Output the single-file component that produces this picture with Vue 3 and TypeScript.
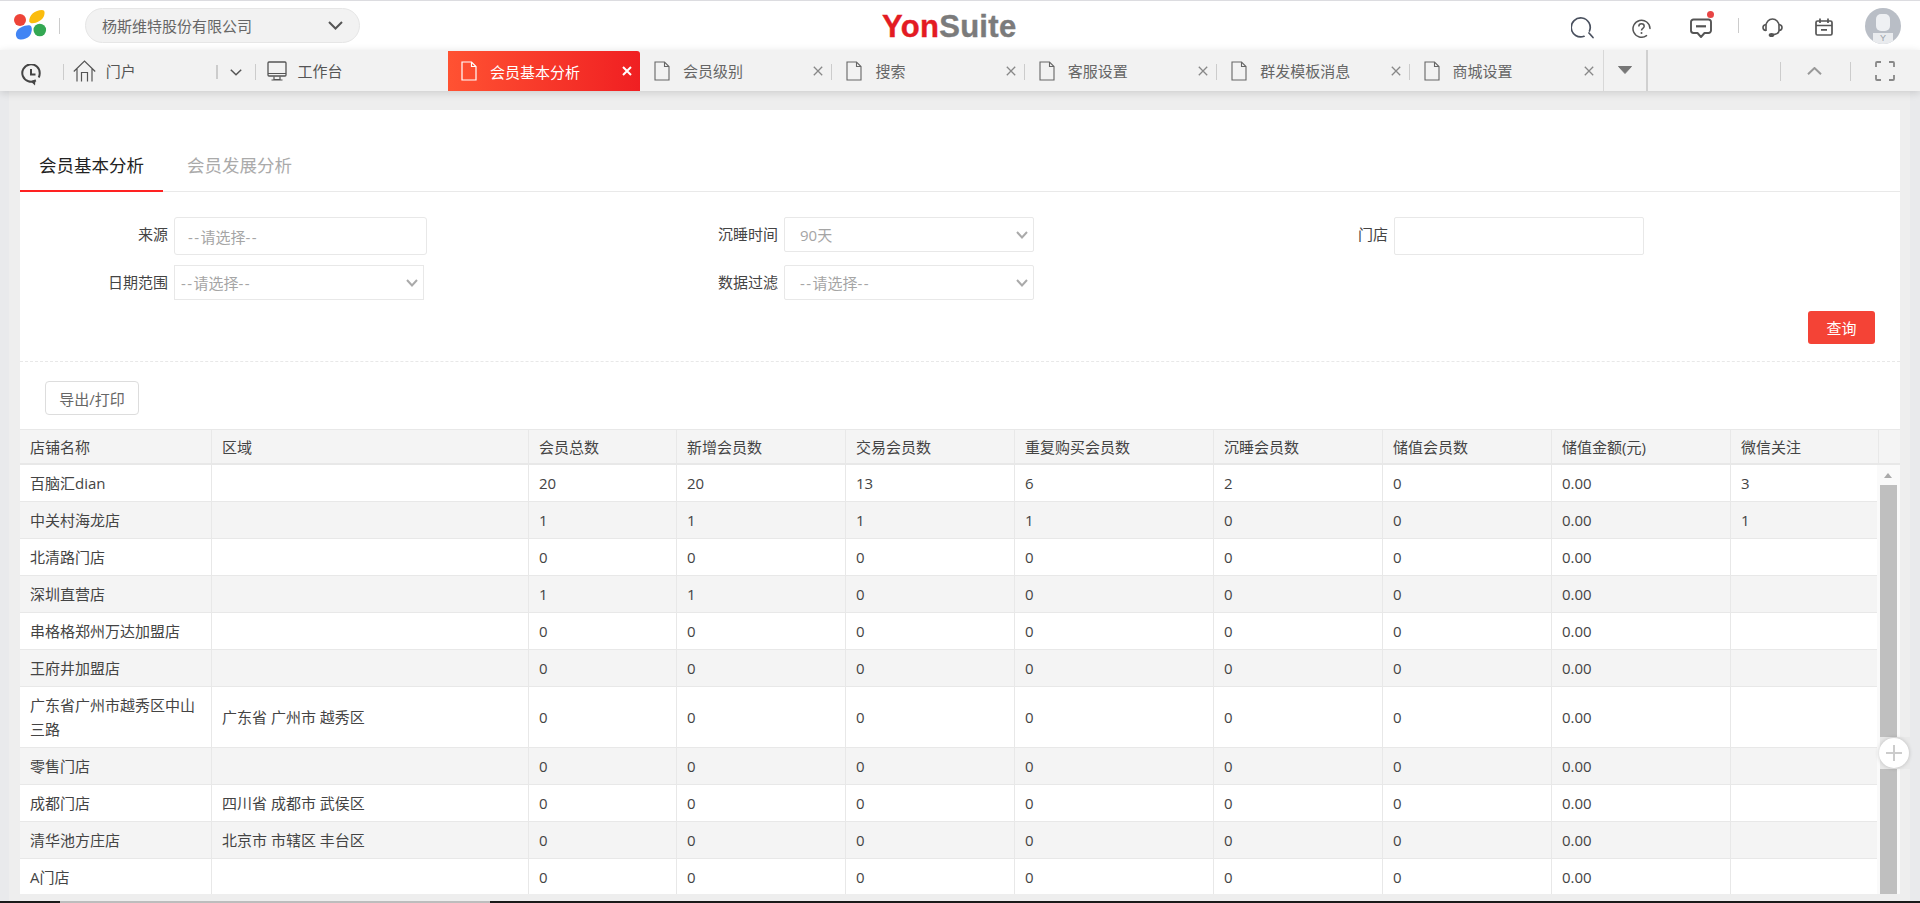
<script setup lang="ts">
interface Row { name: string; area: string; v: string[] }
const z = ['0', '0', '0', '0', '0', '0', '0.00', '']
const tabs: string[] = ['会员级别', '搜索', '客服设置', '群发模板消息', '商城设置']
const heads: string[] = ['店铺名称', '区域', '会员总数', '新增会员数', '交易会员数', '重复购买会员数', '沉睡会员数', '储值会员数', '储值金额(元)', '微信关注']
const rows: Row[] = [
  { name: '百脑汇dian', area: '', v: ['20', '20', '13', '6', '2', '0', '0.00', '3'] },
  { name: '中关村海龙店', area: '', v: ['1', '1', '1', '1', '0', '0', '0.00', '1'] },
  { name: '北清路门店', area: '', v: z },
  { name: '深圳直营店', area: '', v: ['1', '1', '0', '0', '0', '0', '0.00', ''] },
  { name: '串格格郑州万达加盟店', area: '', v: z },
  { name: '王府井加盟店', area: '', v: z },
  { name: '广东省广州市越秀区中山三路', area: '广东省 广州市 越秀区', v: z },
  { name: '零售门店', area: '', v: z },
  { name: '成都门店', area: '四川省 成都市 武侯区', v: z },
  { name: '清华池方庄店', area: '北京市 市辖区 丰台区', v: z },
  { name: 'A门店', area: '', v: z },
]
const widths: number[] = [192, 317, 148, 169, 169, 199, 169, 169, 179]
</script>

<template>
  <div class="app">
    <header class="top">
      <div class="top-left">
        <svg class="logo" width="34" height="32" viewBox="13 9 34 32">
          <circle cx="20" cy="20" r="6" fill="#ee4438" />
          <path d="M29.200 21.500C29 15 35 10 42 10C45 10 45 13 44 16C42.500 21 31 26 29.200 21.500Z" fill="#fbbc0d" />
          <path d="M16 33C17 28 26 24.500 30 25.500C33 26.500 32 33 29.500 36C26.500 39.500 20 40.500 17.500 38.500C16 37 15.700 35 16 33Z" fill="#4285f4" />
          <circle cx="39.800" cy="30" r="6.300" fill="#34a853" />
        </svg>
        <i class="top-sep"></i>
        <div class="company">
          <span>杨斯维特股份有限公司</span>
          <svg width="15" height="9" viewBox="0 0 15 9"><path d="M1 1l6.500 6.500L14 1" fill="none" stroke="#555" stroke-width="2" /></svg>
        </div>
      </div>
      <div class="brand"><span class="b-red">Yon</span><span class="b-gray">Suite</span></div>
      <div class="top-right">
        <svg class="i-search" width="24" height="22" viewBox="0 0 24 22">
          <path d="M13 19.300A9.500 9.500 0 1 1 18.500 14" fill="none" stroke="#49505e" stroke-width="1.700" stroke-linecap="round" />
          <path d="M18 16l4 4.500" fill="none" stroke="#49505e" stroke-width="1.700" stroke-linecap="round" />
        </svg>
        <svg class="i-help" width="19" height="19" viewBox="0 0 19 19">
          <path d="M14.500 16.600A8.500 8.500 0 1 1 18 9.500" fill="none" stroke="#555" stroke-width="1.500" stroke-linecap="round" />
          <path d="M6.800 7.400C6.800 5.700 8 4.800 9.500 4.800S12.200 5.800 12.200 7.300C12.200 9.300 9.500 9.500 9.500 11.500" fill="none" stroke="#555" stroke-width="1.500" />
          <circle cx="9.500" cy="14" r="1" fill="#555" />
        </svg>
        <span class="msg">
          <svg width="22" height="21" viewBox="0 0 22 21">
            <path d="M3.500 1.500H18.500A2.500 2.500 0 0 1 21 4V12.500A2.500 2.500 0 0 1 18.500 15H14.500L11 19L7.500 15H3.500A2.500 2.500 0 0 1 1 12.500V4A2.500 2.500 0 0 1 3.500 1.500Z" fill="none" stroke="#555" stroke-width="1.900" stroke-linejoin="round" />
            <path d="M6 8.300H16" stroke="#555" stroke-width="2.200" />
          </svg>
          <i class="dot"></i>
        </span>
        <i class="top-sep2"></i>
        <svg class="i-head" width="21" height="20" viewBox="0 0 21 20">
          <path d="M4 13V8A6.500 7 0 0 1 17 8V12.500C17 15 14.500 16.500 10 16.800" fill="none" stroke="#555" stroke-width="1.600" />
          <path d="M4 6.500C2 6.800 1 8 1 9.500S2 12.300 4 12.500M17 6.500C19 6.800 20 8 20 9.500S19 12.300 17 12.500" fill="none" stroke="#555" stroke-width="1.600" />
          <ellipse cx="9.500" cy="17" rx="2.800" ry="2" fill="#555" />
        </svg>
        <svg class="i-cal" width="18" height="18" viewBox="0 0 18 18">
          <rect x="1" y="3" width="16" height="14" rx="1.500" fill="none" stroke="#555" stroke-width="1.700" />
          <path d="M5 0.500V5M13 0.500V5M1 7.500H17M6 11.800H12" stroke="#555" stroke-width="1.700" fill="none" />
        </svg>
        <div class="avatar">
          <i class="av-body"></i>
          <div class="av-shirt">Y</div>
        </div>
      </div>
    </header>

    <nav class="tabbar">
      <div class="hist">
        <svg width="20" height="22" viewBox="0 0 20 22">
          <path d="M14.800 16.300A8.700 8.700 0 1 1 18.700 9.500C18.700 11 18.300 12.300 17.700 13.400" fill="none" stroke="#444" stroke-width="2" />
          <path d="M10 5V10.500H14.500" fill="none" stroke="#444" stroke-width="2" />
          <path d="M9.500 17.200L14.500 15.500L14 21.500Z" fill="#444" />
        </svg>
      </div>
      <i class="vsep"></i>
      <div class="portal">
        <svg width="23" height="22" viewBox="0 0 23 22">
          <path d="M0.800 11.500L11.500 1L22.200 11.500M4 8.800V21.500M19 8.800V21.500M8.500 21.500V12.500H14.500V21.500" fill="none" stroke="#555" stroke-width="1.200" />
        </svg>
        <span>门户</span>
      </div>
      <i class="vsep thick"></i>
      <div class="more">
        <svg width="12" height="7" viewBox="0 0 12 7"><path d="M0.800 0.800L6 5.800L11.200 0.800" fill="none" stroke="#555" stroke-width="1.500" /></svg>
      </div>
      <i class="vsep"></i>
      <div class="desk">
        <svg width="20" height="20" viewBox="0 0 20 20">
          <rect x="1" y="1" width="18" height="14" rx="1" fill="none" stroke="#555" stroke-width="1.300" />
          <path d="M1 12.500H19" stroke="#555" stroke-width="1" />
          <path d="M7 15.500V18.500H13V15.500M4.500 19H15.500" fill="none" stroke="#555" stroke-width="1.200" />
        </svg>
        <span>工作台</span>
      </div>
      <div class="tab-on">
        <svg width="16" height="20" viewBox="0 0 16 20">
          <path d="M1 1H10.500L15 5.500V19H1ZM10.500 1V5.500H15" fill="none" stroke="#fff" stroke-width="1.200" />
        </svg>
        <span class="t-text">会员基本分析</span>
        <svg class="t-x" width="10" height="10" viewBox="0 0 10 10"><path d="M1 1L9 9M9 1L1 9" stroke="#fff" stroke-width="2" /></svg>
      </div>
      <div v-for="(t, i) in tabs" :key="t" class="tab">
        <svg width="16" height="20" viewBox="0 0 16 20">
          <path d="M1 1H10.500L15 5.500V19H1ZM10.500 1V5.500H15" fill="none" stroke="#666" stroke-width="1.100" />
        </svg>
        <span class="t-text">{{ t }}</span>
        <svg class="t-x" width="10" height="10" viewBox="0 0 10 10"><path d="M0.800 0.800L9.200 9.200M9.200 0.800L0.800 9.200" stroke="#888" stroke-width="1.300" /></svg>
        <i v-if="i < tabs.length - 1" class="vsep"></i>
      </div>
      <div class="drop">
        <svg width="14" height="8" viewBox="0 0 14 8"><path d="M0.500 0.500H13.500L7 7.500Z" fill="#777" stroke="#777" stroke-linejoin="round" /></svg>
      </div>
      <div class="tb-space"></div>
      <div class="tb-up">
        <svg width="15" height="8" viewBox="0 0 15 8"><path d="M1 7.200L7.500 1L14 7.200" fill="none" stroke="#999" stroke-width="2" /></svg>
      </div>
      <div class="tb-full">
        <svg width="20" height="20" viewBox="0 0 20 20">
          <path d="M1 6V2A1 1 0 0 1 2 1H6M14 1H18A1 1 0 0 1 19 2V6M19 14V18A1 1 0 0 1 18 19H14M6 19H2A1 1 0 0 1 1 18V14" fill="none" stroke="#888" stroke-width="1.800" />
        </svg>
      </div>
    </nav>

    <main class="frame">
      <section class="panel">
        <div class="ptabs">
          <div class="ptab active">会员基本分析</div>
          <div class="ptab">会员发展分析</div>
        </div>

        <div class="form">
          <div class="fitem">
            <label>来源</label>
            <div class="box big c1"><span class="ph ml14"><b>--</b>请选择<b>--</b></span></div>
          </div>
          <div class="fitem">
            <label>沉睡时间</label>
            <div class="box sel"><span class="ph ml16">90天</span>
              <svg width="12" height="8" viewBox="0 0 12 8"><path d="M1 1L6 6.500L11 1" fill="none" stroke="#aaa" stroke-width="2" /></svg>
            </div>
          </div>
          <div class="fitem">
            <label>门店</label>
            <div class="box big"></div>
          </div>
          <div class="fitem">
            <label>日期范围</label>
            <div class="box sel sq"><span class="ph ml7"><b>--</b>请选择<b>--</b></span>
              <svg width="12" height="8" viewBox="0 0 12 8"><path d="M1 1L6 6.500L11 1" fill="none" stroke="#aaa" stroke-width="2" /></svg>
            </div>
          </div>
          <div class="fitem">
            <label>数据过滤</label>
            <div class="box sel"><span class="ph ml16"><b>--</b>请选择<b>--</b></span>
              <svg width="12" height="8" viewBox="0 0 12 8"><path d="M1 1L6 6.500L11 1" fill="none" stroke="#aaa" stroke-width="2" /></svg>
            </div>
          </div>
        </div>

        <div class="query-row"><button class="query">查询</button></div>

        <div class="export-row"><button class="export">导出/打印</button></div>

        <table class="thead">
          <colgroup>
            <col v-for="(w, i) in widths" :key="i" :style="{ width: w + 'px' }" />
            <col class="c-10" />
            <col />
          </colgroup>
          <tbody>
            <tr>
              <th v-for="h in heads" :key="h">{{ h }}</th>
              <th></th>
            </tr>
          </tbody>
        </table>

        <div class="tbody">
          <div class="tbody-clip">
            <table class="tdata">
              <colgroup>
                <col v-for="(w, i) in widths" :key="i" :style="{ width: w + 'px' }" />
                <col />
              </colgroup>
              <tbody>
                <tr v-for="r in rows" :key="r.name">
                  <td>{{ r.name }}</td>
                  <td>{{ r.area }}</td>
                  <td v-for="(c, i) in r.v" :key="i">{{ c }}</td>
                </tr>
              </tbody>
            </table>
          </div>
          <div class="sbar">
            <div class="s-up"><i></i></div>
            <div class="s-thumb"></div>
          </div>
        </div>
      </section>
    </main>

    <div class="plus">
      <div class="plus-c">
        <svg width="16" height="16" viewBox="0 0 16 16"><path d="M8 0V16M0 8H16" stroke="#ccc" stroke-width="2" /></svg>
      </div>
    </div>

    <footer class="strip"><i class="s1"></i><i class="s2"></i><i class="s3"></i></footer>
  </div>
</template>

<style>
html, body { margin: 0; padding: 0; }
</style>

<style scoped>
.app {
  position: relative;
  display: flex;
  flex-direction: column;
  height: 903px;
  overflow: hidden;
  background: #e9eaec;
  font-family: "Open Sans", "Noto Sans CJK SC", sans-serif;
  font-size: 15px;
  color: #444;
}
i { display: block; font-style: normal; }

.top {
  display: flex;
  align-items: center;
  flex: 0 0 50px;
  height: 50px;
  box-sizing: border-box;
  background: #fff;
  border-top: 1px solid #dcdce0;
}
.top-left { display: flex; align-items: center; width: 882px; }
.logo { margin-left: 13px; margin-top: -1px; }
.top-sep { width: 1px; height: 16px; background: #ccc; margin-left: 12px; }
.company {
  display: flex;
  align-items: center;
  justify-content: space-between;
  box-sizing: border-box;
  width: 275px;
  height: 35px;
  margin-left: 25px;
  padding: 0 16px 0 16px;
  background: #f2f2f2;
  border: 1px solid #e6e6e6;
  border-radius: 18px;
  color: #666;
}
.brand {
  width: 136px;
  font-family: "Liberation Sans", Arial, sans-serif;
  font-weight: 700;
  font-size: 31px;
  line-height: 40px;
  letter-spacing: 0.300px;
  -webkit-text-stroke: 0.400px currentColor;
  white-space: nowrap;
  margin-top: 2px;
}
.b-red { color: #e31b23; }
.b-gray { color: #7b7b7b; }
.top-right { flex: 1; display: flex; align-items: center; justify-content: flex-end; padding-right: 19px; }
.top-right > svg, .top-right > span { flex: none; display: block; }
.i-search { margin-right: 37px; margin-top: 5px; }
.i-help { margin-right: 39px; margin-top: 5px; }
.msg { position: relative; width: 22px; height: 21px; margin-right: 26px; margin-top: 6px; }
.msg svg { display: block; }
.dot { position: absolute; left: 17px; top: -7px; width: 7px; height: 7px; border-radius: 50%; background: #e84545; }
.top-sep2 { width: 1px; height: 15px; background: #ccc; margin-right: 23px; }
.i-head { margin-right: 32px; margin-top: 4px; }
.i-cal { margin-right: 32px; margin-top: 2px; }
.avatar {
  position: relative;
  width: 36px;
  height: 36px;
  margin-top: 1px;
  border-radius: 50%;
  background: #b9bec6;
  overflow: hidden;
}
.av-body { position: absolute; left: 11px; top: 6px; width: 14px; height: 17px; background: #eef0f3; border-radius: 5px; }
.av-shirt {
  position: absolute;
  left: 8px;
  top: 25px;
  width: 20px;
  height: 11px;
  background: #e9ebee;
  font-family: "Liberation Sans", sans-serif;
  font-size: 9px;
  line-height: 11px;
  text-align: center;
  color: #9aa0a8;
}

.tabbar {
  position: relative;
  display: flex;
  align-items: center;
  flex: 0 0 41px;
  height: 41px;
  background: #f2f2f2;
  box-shadow: 0 2px 8px rgba(0, 0, 0, 0.14);
  color: #555;
  z-index: 2;
}
.tabbar svg { display: block; flex: none; }
.vsep { flex: none; width: 1px; height: 16px; margin-top: 2px; background: #ccc; }
.vsep.thick { width: 2px; height: 14px; }
.hist { width: 63px; display: flex; justify-content: center; margin-top: 8px; }
.portal { display: flex; align-items: center; width: 152px; padding-left: 9px; box-sizing: border-box; }
.portal span { margin-left: 10px; }
.more { width: 38px; display: flex; justify-content: center; margin-top: 3px; }
.desk { display: flex; align-items: center; width: 192px; padding-left: 11px; box-sizing: border-box; }
.desk span { margin-left: 10px; }
.tab-on {
  display: flex;
  align-items: center;
  flex: none;
  box-sizing: border-box;
  width: 192px;
  height: 40px;
  margin-top: 1px;
  padding-left: 13px;
  color: #fff;
  background: linear-gradient(90deg, #ff5232, #f01f22);
  border-top-right-radius: 3px;
}
.tab {
  display: flex;
  align-items: center;
  flex: none;
  box-sizing: border-box;
  width: 192.400px;
  height: 40px;
  padding-left: 14px;
  color: #666;
}
.t-text { margin-left: 13px; white-space: nowrap; }
.t-x { margin-left: auto; margin-right: 8px; }
.tab .vsep { margin-left: 0; }
.drop {
  flex: none;
  display: flex;
  justify-content: center;
  box-sizing: border-box;
  width: 45px;
  height: 41px;
  margin-left: 1px;
  padding-top: 16px;
  border-left: 1px solid #d8d8d8;
  border-right: 2px solid #d0d0d0;
}
.tb-space { flex: none; width: 132px; }
.tb-up, .tb-full {
  flex: none;
  display: flex;
  align-items: center;
  box-sizing: border-box;
  height: 19px;
  border-left: 1px solid #ccc;
  margin-top: 1px;
}
.tb-up { width: 70px; padding-left: 26px; }
.tb-full { width: 70px; padding-left: 24px; }

.frame {
  flex: 1;
  display: flex;
  min-height: 0;
  margin: 0 10px 0 9px;
  padding: 19px 10px 7px 11px;
  background: #eeeeee;
}
.panel {
  flex: 1;
  display: flex;
  flex-direction: column;
  min-width: 0;
  overflow: hidden;
  background: #fff;
}

.ptabs {
  display: flex;
  flex: none;
  box-sizing: border-box;
  height: 82px;
  padding-top: 36px;
  border-bottom: 1px solid #e9e9e9;
}
.ptab {
  height: 46px;
  box-sizing: border-box;
  padding: 0 20px;
  line-height: 38px;
  font-size: 17.500px;
  color: #aaa;
  white-space: nowrap;
}
.ptab + .ptab { padding-left: 24px; }
.ptab.active { padding-left: 19px; color: #222; border-bottom: 2px solid #f22; width: 143px; }

.form {
  flex: none;
  display: grid;
  grid-template-columns: repeat(3, 610px);
  row-gap: 10px;
  padding-top: 25px;
  color: #444;
}
.fitem { display: flex; align-items: flex-start; }
.fitem label { width: 148px; margin-right: 6px; text-align: right; line-height: 34px; white-space: nowrap; }
.box {
  display: flex;
  align-items: center;
  box-sizing: border-box;
  width: 250px;
  height: 35px;
  background: #fff;
  border: 1px solid #e8e8e8;
  border-radius: 2px;
}
.box.big { height: 38px; }
.box.c1 { width: 253px; border-width: 1.500px; border-radius: 3px; }
.box.sq { border-radius: 0; }
.box.sel { justify-content: space-between; padding-right: 5px; }
.ph { color: #a5a5a5; white-space: nowrap; }
.ph b { font-weight: 400; letter-spacing: 1.400px; }
.ml14 { margin-left: 13px; }
.ml16 { margin-left: 15px; }
.ml7 { margin-left: 6px; }

.query-row { flex: none; display: flex; justify-content: flex-end; padding: 11px 25px 17px 0; border-bottom: 1px dashed #e8e8e8; }
.query {
  width: 67px;
  height: 33px;
  padding: 0;
  background: #f44336;
  color: #fff;
  font: inherit;
  border: 0;
  border-radius: 3px;
}
.export-row { flex: none; padding: 19px 0 14px 25px; }
.export {
  display: block;
  width: 94px;
  height: 34px;
  padding: 0;
  font: inherit;
  color: #666;
  background: #fff;
  border: 1px solid #ddd;
  border-radius: 4px;
}

table { border-collapse: separate; border-spacing: 0; table-layout: fixed; }
.thead { flex: none; width: 1880px; background: #f4f4f4; }
.c-10 { width: 148px; }
.thead th {
  box-sizing: border-box;
  height: 36px;
  padding: 0 10px;
  text-align: left;
  font-weight: 400;
  color: #444;
  border-top: 1px solid #e8e8e8;
  border-right: 1px solid #e8e8e8;
  border-bottom: 2px solid #e8e8e8;
}
.thead th:last-child { border-right: 0; }
.tbody { flex: 1; display: flex; min-height: 0; }
.tbody-clip { width: 1857px; overflow: hidden; }
.tdata { width: 1857px; }
.tdata td {
  padding: 6px 10px;
  line-height: 24px;
  color: #444;
  border-right: 1px solid #e8e8e8;
  border-bottom: 1px solid #e8e8e8;
  word-break: break-all;
}
.tdata td:last-child { border-right: 0; }
.tdata tr:nth-child(even) td { background: #f4f4f4; }
.sbar {
  flex: 1;
  display: flex;
  flex-direction: column;
  box-sizing: border-box;
  padding: 0 3px;
  background: #fafafa;
}
.s-up { height: 20px; flex: none; position: relative; }
.s-up i {
  position: absolute;
  left: 4px;
  top: 8px;
  width: 0;
  height: 0;
  border-left: 4.500px solid transparent;
  border-right: 4.500px solid transparent;
  border-bottom: 5px solid #aaa;
}
.s-thumb { flex: 1; background: #bfbfbf; }

.plus {
  position: absolute;
  left: 1880px;
  top: 737px;
  width: 30px;
  height: 32px;
  background: #e9e9e9;
  z-index: 3;
}
.plus-c {
  position: absolute;
  left: -1px;
  top: 1px;
  display: flex;
  align-items: center;
  justify-content: center;
  width: 30px;
  height: 30px;
  background: #fff;
  border-radius: 50%;
  box-shadow: 0 0 4px rgba(0, 0, 0, 0.2);
}
.plus-c svg { display: block; }

.strip { flex: 0 0 2px; display: flex; height: 2px; }
.s1 { width: 60px; background: #1a1a1a; }
.s2 { width: 430px; background: #bdbdbd; }
.s3 { flex: 1; background: #1a1a1a; }
</style>
